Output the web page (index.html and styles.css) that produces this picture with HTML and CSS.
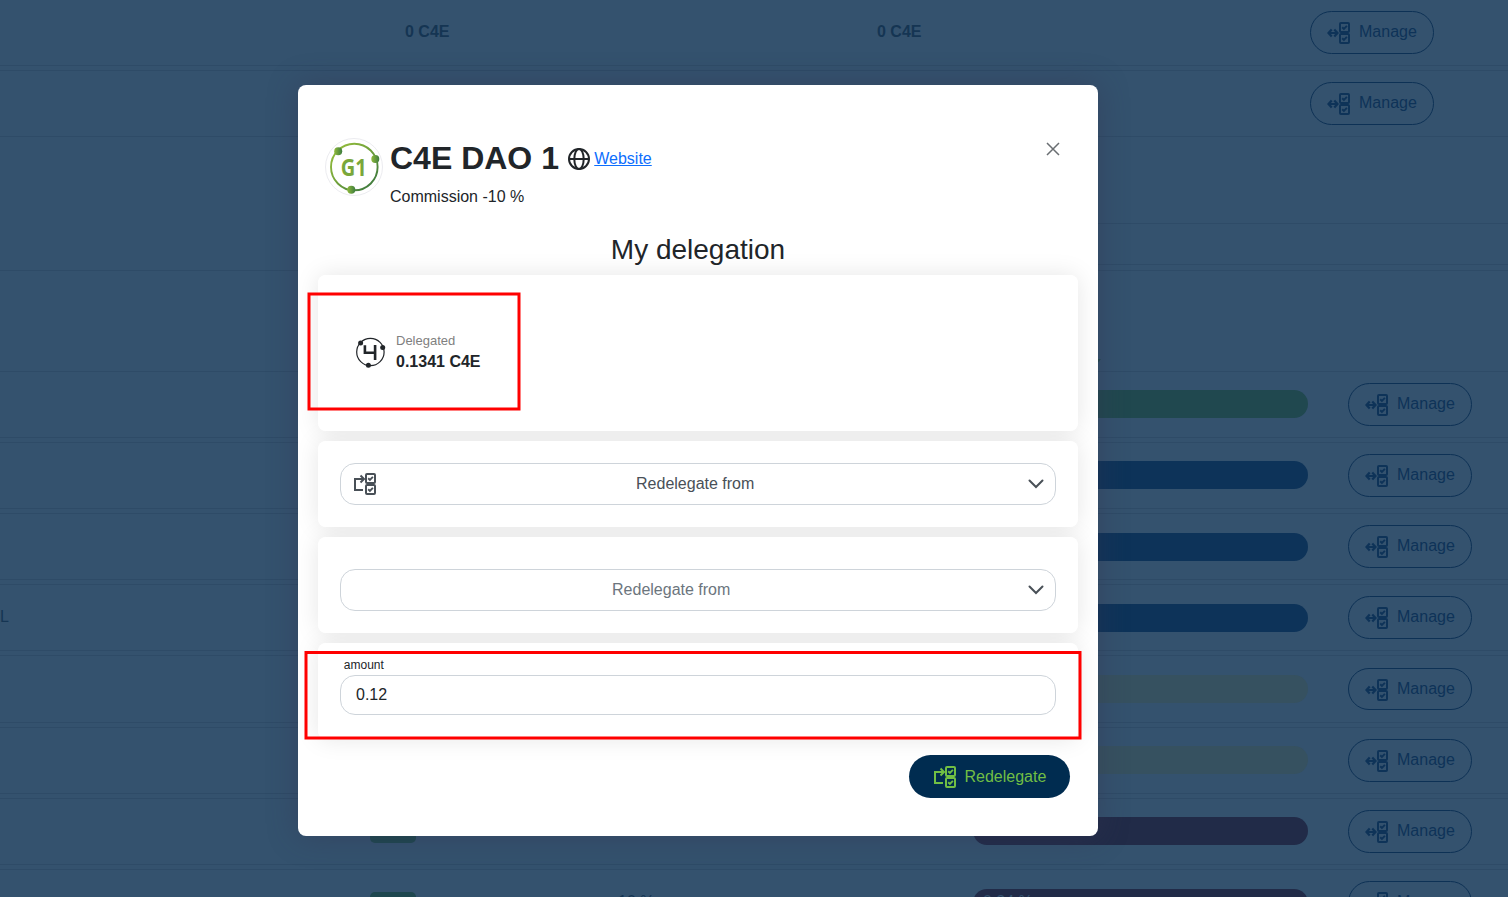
FILE: index.html
```html
<!DOCTYPE html>
<html lang="en">
<head>
<meta charset="utf-8">
<title>Staking</title>
<link rel="stylesheet" href="styles.css">
</head>
<body>
<svg class="defs" width="0" height="0" aria-hidden="true">
  <defs>
    <g id="boxes" fill="none" stroke="currentColor">
      <rect x="13" y="2" width="9" height="9" rx="1" stroke-width="2"/>
      <rect x="13" y="13" width="9" height="9" rx="1" stroke-width="2"/>
      <path d="M15.2 6.3l1.700 1.600 3-3M15.2 17.3l1.700 1.600 3-3" stroke-width="1.900"/>
    </g>
    <symbol id="manage" viewBox="0 0 24 24">
      <use href="#boxes"/>
      <path d="M2 12h8.500M4.700 8.500L1.500 12l3.200 3.500M7.300 8.500l3.200 3.500-3.200 3.500" fill="none" stroke="currentColor" stroke-width="2.200"/>
    </symbol>
    <symbol id="redelegate" viewBox="0 0 24 24">
      <use href="#boxes"/>
      <path d="M10 18H2V7h8.500M7.500 3.500L11 7l-3.500 3.500" fill="none" stroke="currentColor" stroke-width="2"/>
    </symbol>
    <linearGradient id="ring" x1="0" y1="0" x2="1" y2="1">
      <stop offset="0" stop-color="#9bc23c"/><stop offset=".45" stop-color="#74a43b"/><stop offset="1" stop-color="#33713f"/>
    </linearGradient>
    <linearGradient id="dot"><stop offset="0" stop-color="#8fb93a"/><stop offset="1" stop-color="#3d7d3f"/></linearGradient>
  </defs>
</svg>

<main class="page">
  <section class="summary">
    <div class="row summary-row"><span></span><b>0 C4E</b><b>0 C4E</b><button class="manage"><svg><use href="#manage"/></svg>Manage</button></div>
    <div class="row summary-row"><span></span><span></span><span></span><button class="manage"><svg><use href="#manage"/></svg>Manage</button></div>
  </section>
  <div class="toolbar"><div class="search"></div></div>
  <header class="head"><svg width="12" height="8" viewBox="0 0 12 8"><path d="M0 1h12L6 8z" fill="currentColor"/></svg></header>
  <section class="list">
    <div class="row"><span></span><span></span><span></span><span class="bar green"></span><button class="manage"><svg><use href="#manage"/></svg>Manage</button></div>
    <div class="row"><span></span><span></span><span></span><span class="bar blue"></span><button class="manage"><svg><use href="#manage"/></svg>Manage</button></div>
    <div class="row"><span></span><span></span><span></span><span class="bar blue"></span><button class="manage"><svg><use href="#manage"/></svg>Manage</button></div>
    <div class="row"><span class="name">L</span><span></span><span></span><span class="bar blue"></span><button class="manage"><svg><use href="#manage"/></svg>Manage</button></div>
    <div class="row"><span></span><span></span><span></span><span class="bar olive"></span><button class="manage"><svg><use href="#manage"/></svg>Manage</button></div>
    <div class="row"><span></span><span></span><span></span><span class="bar olive"></span><button class="manage"><svg><use href="#manage"/></svg>Manage</button></div>
    <div class="row"><span></span><span class="badge"></span><span></span><span class="bar plum"></span><button class="manage"><svg><use href="#manage"/></svg>Manage</button></div>
    <div class="row"><span></span><span class="badge"></span><span class="txt">10 %</span><span class="bar plum">0.24 %</span><button class="manage"><svg><use href="#manage"/></svg>Manage</button></div>
  </section>
</main>

<div class="modal">
  <div class="top">
    <svg class="avatar" width="60" height="60" viewBox="0 0 60 60">
      <circle cx="30" cy="30" r="28.500" fill="#fff" stroke="#ececf0"/>
      <circle cx="30.300" cy="30" r="23.300" fill="none" stroke="url(#ring)" stroke-width="1.900"/>
      <circle cx="14.200" cy="14.200" r="4" fill="url(#dot)"/><circle cx="51.300" cy="22" r="4" fill="url(#dot)"/><circle cx="27.300" cy="52.700" r="4" fill="url(#dot)"/>
      <text x="16.800" y="39.300" textLength="26" lengthAdjust="spacingAndGlyphs" class="mark">G1</text>
    </svg>
    <div class="who">
      <div class="title"><h1>C4E DAO 1</h1>
        <svg width="24" height="24" viewBox="0 0 24 24" fill="none" stroke="#212529" stroke-width="2"><circle cx="12" cy="12" r="10"/><ellipse cx="12" cy="12" rx="4.700" ry="10"/><path d="M2 12h20"/></svg>
        <a href="#">Website</a></div>
      <div class="commission">Commission -10 %</div>
    </div>
    <svg class="close" width="14" height="14" viewBox="0 0 14 14"><path d="M1 1l12 12M13 1L1 13" stroke="#6a6e72" stroke-width="1.500"/></svg>
  </div>
  <h2>My delegation</h2>
  <div class="card delegation">
    <svg width="32" height="32" viewBox="0 0 32 32" fill="none" stroke="#212529"><circle cx="16.400" cy="16" r="13.700" stroke-width="1.200"/><g fill="#212529" stroke="none"><circle cx="6.600" cy="7" r="2.500"/><circle cx="28.700" cy="11.600" r="2.500"/><circle cx="14.400" cy="29.200" r="2.500"/></g><path d="M10.900 9.300v7.400h10.700M21.100 9v15" stroke-width="2.600"/></svg>
    <div class="stake"><div class="caption">Delegated</div><strong>0.1341 C4E</strong></div>
  </div>
  <div class="card pick">
    <div class="select"><svg class="lead"><use href="#redelegate"/></svg><span>Redelegate from</span><svg class="chev" viewBox="0 0 16 10"><path d="M1.500 1.500L8 8l6.500-6.500"/></svg></div>
  </div>
  <div class="card pick second">
    <div class="select"><span>Redelegate from</span><svg class="chev" viewBox="0 0 16 10"><path d="M1.500 1.500L8 8l6.500-6.500"/></svg></div>
  </div>
  <div class="card amount">
    <label for="amount">amount</label>
    <input id="amount" value="0.12">
  </div>
  <button class="submit"><svg><use href="#redelegate"/></svg>Redelegate</button>
</div>

<svg class="marks" width="1508" height="897"><rect x="309" y="294" width="210" height="115"/><rect x="306" y="652.500" width="774" height="85.500"/></svg>
</body>
</html>
```
FILE: styles.css
```css
* { box-sizing: border-box; }
body { margin: 0; height: 897px; overflow: hidden; position: relative; background: #34526e; font: 16px/24px "Liberation Sans", Arial, sans-serif; color: #212529; }
button { font: inherit; cursor: pointer; }
.defs { position: absolute; }
.page { height: 897px; overflow: hidden; color: #153553; }
.summary { display: flex; flex-direction: column; gap: 4px; margin-top: -1.19px; }
.row { display: grid; grid-template-columns: 370px 248px 355px 375px 1fr; align-items: center; height: 67.19px; flex: none; border: solid #2e4b67; border-width: 1px 0; }
.summary-row { grid-template-columns: 405px 472px 433px 1fr; }
.row .txt, .row .name { margin-top: -1px; }
.manage { display: flex; align-items: center; width: 124px; height: 42.8px; padding: 0 0 0 16px; border: 1px solid #0d3155; border-radius: 22px; background: none; color: #0e3358; line-height: 24px; }
.manage svg { width: 24px; height: 24px; margin: 2px 8px 0 0; }
.toolbar { height: 133px; padding-top: 86px; display: flex; justify-content: flex-end; }
.search { width: 700px; height: 42px; border: solid #2e4b67; border-width: 1px 0; }
.head { height: 100.42px; border-top: 1px solid #2e4b67; padding: 87px 0 0 1089px; line-height: 0; color: #204b4e; }
.list { display: flex; flex-direction: column; gap: 4px; }
.list .manage { padding-bottom: .6px; }
.summary .manage { padding-bottom: 1px; }
.bar { width: 335px; height: 28px; border-radius: 14px; padding: 0 10px; line-height: 26px; color: #34526e; }
.green { background: #20484f; }
.blue { background: #0d3359; }
.olive { background: #365160; }
.plum { background: #212b48; }
.badge { width: 46px; height: 22.4px; margin-top: .4px; border-radius: 5px; background: #1e474f; }

.modal { position: absolute; left: 298px; top: 85px; width: 800px; height: 751px; padding: 52px 20px 0; background: #fff; border-radius: 8px; box-shadow: 0 0 30px rgba(50, 50, 80, .45); isolation: isolate; display: flex; flex-direction: column; }
.top { display: flex; align-items: flex-start; padding: 0 18px 0 6px; height: 95px; }
.avatar { flex: none; }
.mark { font: 700 24px "Open Sans", "Noto Sans", sans-serif; fill: #7aa73a; }
.who { flex: 1; padding-left: 6px; }
.title { display: flex; align-items: center; height: 43px; }
h1 { margin: -2px 8px 0 0; font-size: 32px; line-height: 38px; font-weight: 700; }
.title a { margin-left: 3.3px; color: #0d6efd; }
.commission { margin-top: 5px; }
.close { margin-top: 5px; }
h2 { margin: 0; height: 43px; font-size: 28px; line-height: 36px; font-weight: 400; text-align: center; }
.card { position: relative; flex: none; margin-bottom: 10px; border-radius: 8px; background: #fff; }
.card::before { content: ""; position: absolute; inset: 0; z-index: -1; border-radius: 8px; box-shadow: 0 0 24px rgba(0, 0, 0, .1); }
.delegation { height: 156px; padding: 0 0 0 36px; display: flex; align-items: center; gap: 10px; }
.delegation svg { margin-top: -3px; }
.stake { margin-top: -4px; }
.delegation strong { display: block; line-height: 20px; margin-top: 1px; }
.caption { font-size: 13px; line-height: 20px; color: #808080; }
.pick { height: 86px; padding: 22px; }
.pick.second { height: 96px; padding-top: 32px; }
.select { display: flex; align-items: center; height: 42px; padding: 0 11px 0 12px; border: 1px solid #ced4da; border-radius: 15px; color: #495057; text-align: center; }
.select span { flex: 1; padding-bottom: 1px; }
.select .lead { width: 24px; height: 24px; }
.select .lead + span { padding-right: 14.600px; }
.second .select { color: #6c757d; }
.second .select span { padding-right: 38.600px; }
.chev { width: 16px; height: 10px; fill: none; stroke: #495057; stroke-width: 2; stroke-linecap: round; }
.amount { height: 96px; padding: 14px 22px 0; }
label { display: block; padding-left: 3.800px; font-size: 12px; line-height: 16px; }
input { display: block; width: 100%; height: 40px; margin-top: 2px; padding: 0 15px; border: 1px solid #ced4da; border-radius: 15px; background: #fff; font: inherit; color: #212529; outline: 0; }
.submit { align-self: flex-end; display: flex; align-items: center; width: 161px; height: 43px; margin: 6px 8px 0 0; padding: 0 0 0 24px; border: 0; border-radius: 22px; background: #002c50; color: #71bf44; }
.submit svg { width: 24px; height: 24px; margin-right: 7.5px; }
.marks { position: absolute; left: 0; top: 0; fill: none; stroke: #f00; stroke-width: 3; pointer-events: none; }
```
